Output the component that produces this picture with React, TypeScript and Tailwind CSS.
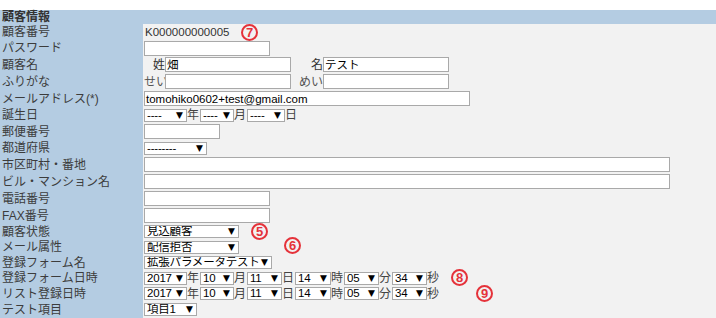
import React from "react";

const font = "font-['Liberation_Sans','Noto_Sans_CJK_JP',sans-serif]";

function Row({ label, h = "h-[17px]", children }: { label: string; h?: string; children?: React.ReactNode }) {
  return (
    <div className={`flex ${h}`}>
      <div className="flex w-[143px] shrink-0 items-center whitespace-nowrap bg-[#b4cce2] pl-[2px] text-[12px] leading-[12px] text-[#3c3c3c]">
        {label}
      </div>
      <div className="flex flex-1 items-center whitespace-nowrap bg-[#f2f2f2] pl-[1px] text-[12px] leading-[12px] text-[#222]">
        {children}
      </div>
    </div>
  );
}

function Input({ w, value }: { w: string; value?: string }) {
  return (
    <div className={`flex h-[15px] shrink-0 items-center whitespace-nowrap border border-[#a9a9a9] bg-white pl-[1px] text-[11.5px] leading-[12px] text-black ${w}`}>
      {value}
    </div>
  );
}

function Sel({ w, value }: { w: string; value: string }) {
  return (
    <div className={`flex h-[13px] shrink-0 items-center justify-between overflow-hidden whitespace-nowrap border border-[#a9a9a9] bg-white pl-[2px] pr-[3px] text-[11.5px] leading-[11px] text-black ${w}`}>
      <span className="tracking-[-0.2px]">{value}</span>
      <span className="font-['DejaVu_Sans',sans-serif] text-[9px]">▼</span>
    </div>
  );
}

function Unit({ c }: { c: string }) {
  return <span className="w-[13px] shrink-0 text-[12px] leading-[12px] text-[#444]">{c}</span>;
}

function Mark({ n, className }: { n: string; className: string }) {
  return (
    <span
      className={`absolute flex h-[17px] w-[17px] items-center justify-center rounded-full border-2 border-[#e5323a] font-['Liberation_Sans',sans-serif] text-[13px] leading-[13px] font-bold text-[#e5323a] ${className}`}
    >
      {n}
    </span>
  );
}

function DateTime() {
  return (
    <>
      <Sel w="w-[43px]" value="2017" />
      <Unit c="年" />
      <Sel w="w-[34px]" value="10" />
      <Unit c="月" />
      <Sel w="w-[35px]" value="11" />
      <Unit c="日" />
      <Sel w="w-[36px]" value="14" />
      <Unit c="時" />
      <Sel w="w-[35px]" value="05" />
      <Unit c="分" />
      <Sel w="w-[35px]" value="34" />
      <Unit c="秒" />
    </>
  );
}

export default function App() {
  return (
    <div className={`relative w-[716px] bg-white pt-[10px] ${font}`}>
      {/* Header */}
      <div className="flex h-[14px] items-center bg-[#b4cce2] pl-[2px] text-[12px] leading-[12px] font-bold text-[#333]">
        顧客情報
      </div>

      <Row label="顧客番号" h="h-[16px]">
        <span className="pl-[1px] text-[11.5px] text-[#333]">K000000000005</span>
      </Row>
      <Row label="パスワード" h="h-[16px]">
        <Input w="w-[126px]" />
      </Row>
      <Row label="顧客名">
        <span className="w-[21px] shrink-0 text-right text-[#333]">姓</span>
        <Input w="w-[126px]" value="畑" />
        <span className="w-[32px] shrink-0 text-right text-[#333]">名</span>
        <Input w="w-[126px]" value="テスト" />
      </Row>
      <Row label="ふりがな">
        <span className="w-[21px] shrink-0 text-right text-[#555]">せい</span>
        <Input w="w-[126px]" />
        <span className="w-[32px] shrink-0 text-right text-[#555]">めい</span>
        <Input w="w-[126px]" />
      </Row>
      <Row label="メールアドレス(*)">
        <Input w="w-[326px]" value="tomohiko0602+test@gmail.com" />
      </Row>
      <Row label="誕生日" h="h-[16px]">
        <Sel w="w-[43px]" value="----" />
        <Unit c="年" />
        <Sel w="w-[34px]" value="----" />
        <Unit c="月" />
        <Sel w="w-[38px]" value="----" />
        <Unit c="日" />
      </Row>
      <Row label="郵便番号">
        <Input w="w-[76px]" />
      </Row>
      <Row label="都道府県" h="h-[16px]">
        <Sel w="w-[63px]" value="--------" />
      </Row>
      <Row label="市区町村・番地">
        <Input w="w-[526px]" />
      </Row>
      <Row label="ビル・マンション名">
        <Input w="w-[526px]" />
      </Row>
      <Row label="電話番号">
        <Input w="w-[126px]" />
      </Row>
      <Row label="FAX番号">
        <Input w="w-[126px]" />
      </Row>
      <Row label="顧客状態" h="h-[15px]">
        <Sel w="w-[95px]" value="見込顧客" />
      </Row>
      <Row label="メール属性" h="h-[16px]">
        <Sel w="w-[95px]" value="配信拒否" />
      </Row>
      <Row label="登録フォーム名" h="h-[15px]">
        <Sel w="w-[128px]" value="拡張パラメータテスト" />
      </Row>
      <Row label="登録フォーム日時" h="h-[16px]">
        <DateTime />
      </Row>
      <Row label="リスト登録日時" h="h-[15px]">
        <DateTime />
      </Row>
      <Row label="テスト項目" h="h-[17px]">
        <Sel w="w-[53px]" value="項目1" />
      </Row>

      {/* annotation marks */}
      <Mark n="7" className="left-[241px] top-[24px]" />
      <Mark n="5" className="left-[251px] top-[223px]" />
      <Mark n="6" className="left-[284px] top-[237px]" />
      <Mark n="8" className="left-[451px] top-[269px]" />
      <Mark n="9" className="left-[476px] top-[285px]" />
    </div>
  );
}
